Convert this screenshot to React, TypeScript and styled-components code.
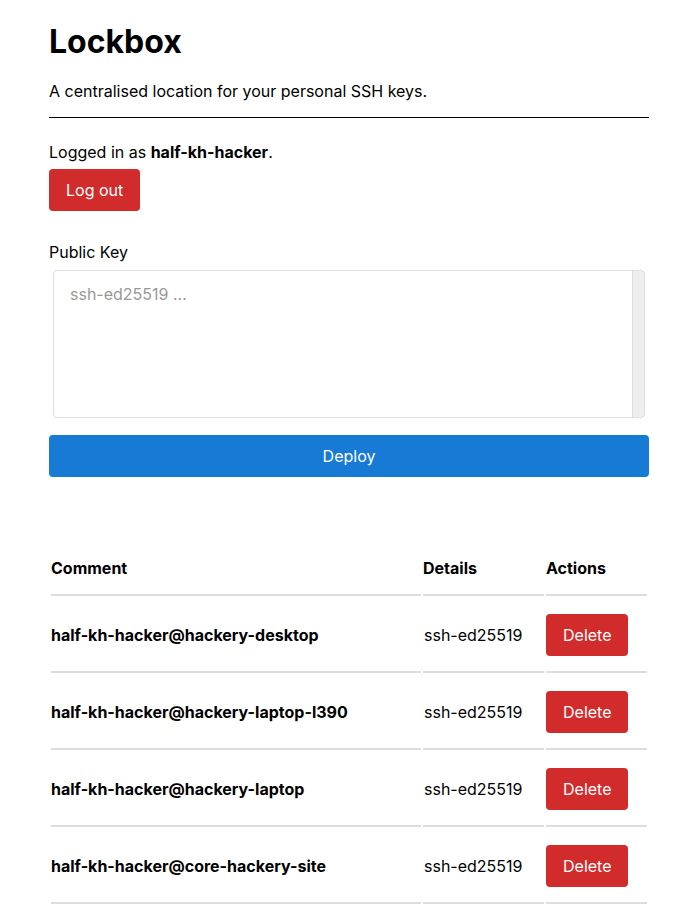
import React, { FC, useState } from 'react';
import styled, { createGlobalStyle } from 'styled-components';

interface IKey {
    comment: string;
    details: string;
}

const keys: IKey[] = [
    { comment: "half-kh-hacker@hackery-desktop", details: "ssh-ed25519" },
    { comment: "half-kh-hacker@hackery-laptop-l390", details: "ssh-ed25519" },
    { comment: "half-kh-hacker@hackery-laptop", details: "ssh-ed25519" },
    { comment: "half-kh-hacker@core-hackery-site", details: "ssh-ed25519" },
];

const App: FC = () => {
    const [publicKey, setPublicKey] = useState<string>("");

    return (
        <>
            <GlobalStyle />
            <Page>
                <Title>Lockbox</Title>
                <Subtitle>A centralised location for your personal SSH keys.</Subtitle>
                <Divider />
                <LoginLine>Logged in as <strong>half-kh-hacker</strong>.</LoginLine>
                <Button color="#d12b2b">Log out</Button>
                <KeyForm onSubmit={(e) => e.preventDefault()}>
                    <Label htmlFor="pubkey">Public Key</Label>
                    <KeyInput
                        id="pubkey"
                        placeholder="ssh-ed25519 ..."
                        value={publicKey}
                        onChange={(e) => setPublicKey(e.target.value)}
                    />
                    <Deploy type="submit" color="#177bd6">Deploy</Deploy>
                </KeyForm>
                <KeyTable>
                    <thead>
                        <tr>
                            <Th width={370}>Comment</Th>
                            <Th width={121}>Details</Th>
                            <Th width={101}>Actions</Th>
                        </tr>
                    </thead>
                    <tbody>
                        {keys.map((key) => (
                            <tr key={key.comment}>
                                <Td className="comment">{key.comment}</Td>
                                <Td className="details">{key.details}</Td>
                                <Td><Button color="#d12b2b">Delete</Button></Td>
                            </tr>
                        ))}
                    </tbody>
                </KeyTable>
            </Page>
        </>
    );
};

const GlobalStyle = createGlobalStyle`
    body{
        margin: 0;
        background: #fff;
        color: #000;
        font-family: Inter, "Noto Sans", sans-serif;
        font-size: 16px;
    }
`;

const Page = styled.main`
    width: 600px;
    padding: 22px 0 40px 49px;
`;

const Title = styled.h1`
    margin: 0;
    font-size: 32px;
    font-weight: 700;
    line-height: 39px;
`;

const Subtitle = styled.p`
    margin: 21px 0 0;
    line-height: 19px;
`;

const Divider = styled.hr`
    margin: 16px 0 0;
    border: none;
    border-top: 1px solid #000;
`;

const LoginLine = styled.p`
    margin: 25px 0 7px;
    line-height: 19px;
`;

const Button = styled.button<{ color: string }>`
    height: 42px;
    padding: 0 17px;
    border: none;
    border-radius: 4px;
    background-color: ${(p) => p.color};
    color: #fff;
    font-family: inherit;
    font-size: 16px;
    cursor: pointer;
`;

const KeyForm = styled.form`
    display: flex;
    flex-direction: column;
    margin-top: 32px;
`;

const Label = styled.label`
    line-height: 19px;
`;

/* the grey strip on the right stands in for the textarea's scrollbar track */
const KeyInput = styled.textarea`
    box-sizing: border-box;
    margin: 8px 4px 0;
    width: 592px;
    height: 148px;
    padding: 13px 28px 13px 16px;
    border: 1px solid #ddd;
    border-radius: 4px;
    background: linear-gradient(to left, #eee 11px, #ddd 11px, #ddd 12px, #fff 12px);
    font-family: inherit;
    font-size: 16px;
    resize: none;
    &::placeholder{
        color: #999;
    }
`;

const Deploy = styled(Button)`
    margin-top: 17px;
    width: 100%;
`;

const KeyTable = styled.table`
    margin-top: 64px;
    width: 600px;
    border-spacing: 2px;
    table-layout: fixed;
`;

const Th = styled.th<{ width: number }>`
    width: ${(p) => p.width}px;
    padding: 16px 0;
    text-align: left;
    font-weight: 700;
    line-height: 19px;
    border-bottom: 2px solid #ddd;
`;

const Td = styled.td`
    padding: 16px 0 15px;
    line-height: 19px;
    vertical-align: middle;
    border-bottom: 2px solid #ddd;
    &.comment{
        font-weight: 700;
    }
    &.details{
        padding-left: 1px;
    }
`;

export default App;
